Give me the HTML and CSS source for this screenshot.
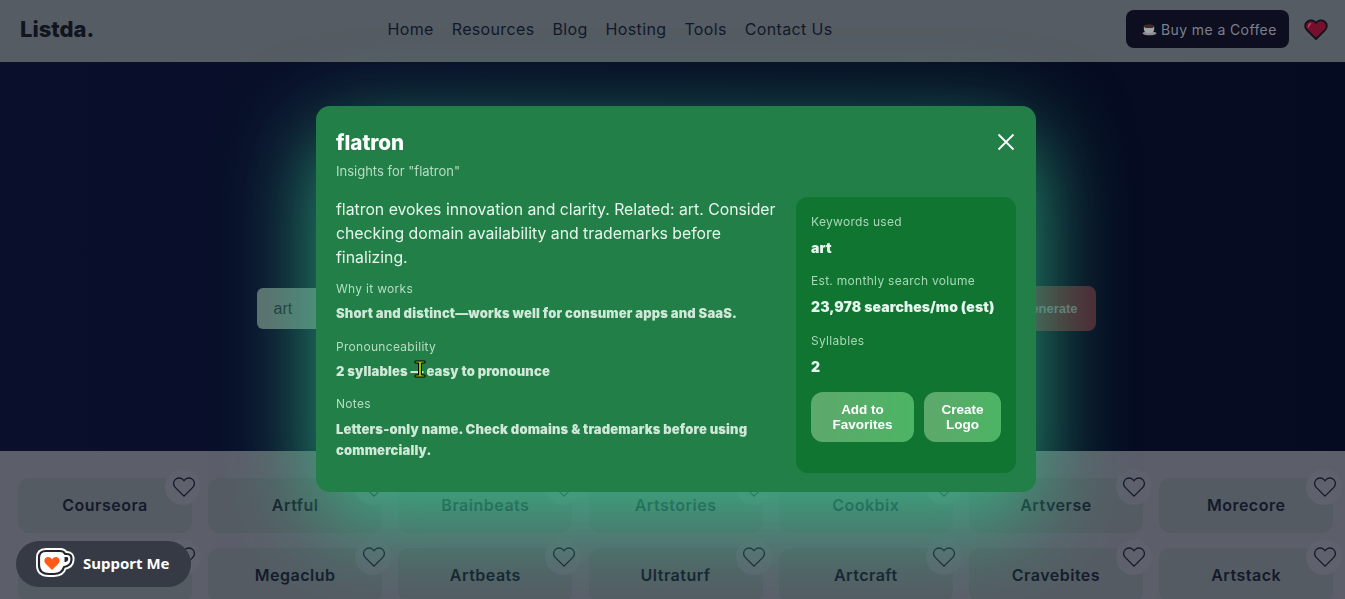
FILE: index.html

```html
<!DOCTYPE html>
<html lang="en">
<head>
  <meta charset="UTF-8" />
  <meta name="viewport" content="width=device-width, initial-scale=1.0"/>
  <title>Listda – Name Generator</title>
  <link rel="stylesheet" href="styles.css">
</head>
<body>
  <header class="topbar">
    <div class="logo">Listda.</div>
    <nav class="nav">
      <a>Home</a>
      <a>Resources</a>
      <a>Blog</a>
      <a>Hosting</a>
      <a>Tools</a>
      <a>Contact Us</a>
    </nav>
    <div class="actions">
      <a class="coffee-btn">
        <svg class="coffee-icon" viewBox="0 0 16 14" width="15" height="14">
          <ellipse cx="8" cy="11.600" rx="7.500" ry="2" fill="#8b8d93"/>
          <path d="M2 4h11v3.500c0 2.500-2.200 4-5.500 4S2 10 2 7.500z" fill="#a0a2a8"/>
          <ellipse cx="7.500" cy="4" rx="5.500" ry="2" fill="#3d2a26"/>
        </svg>
        Buy me a Coffee
      </a>
      <svg class="fav-heart" viewBox="0 0 24 22" width="24" height="23">
        <path d="M12 20.500 2.800 11.300C.3 8.800.8 4.800 3.500 2.900 6 1.200 9.800 1.500 12 4.600c2.200-3.100 6-3.400 8.500-1.700 2.700 1.900 3.200 5.900.7 8.400z" fill="#760f2c" stroke="#12121c" stroke-width="1.800" stroke-linejoin="round"/>
        <path d="M4.500 8.500c0-1.500.8-2.800 2.300-3.300" fill="none" stroke="#b0485f" stroke-width="1.400" stroke-linecap="round"/>
      </svg>
    </div>
  </header>

  <section class="hero">
    <form class="gen-form">
      <div class="gen-input">art</div>
      <div class="gen-btn">Generate</div>
    </form>
  </section>

  <section class="grid">
    <div class="card">Courseora<span class="like"><svg viewBox="0 0 24 24" width="24" height="24"><path d="M20.800 4.600a5.500 5.500 0 0 0-7.800 0L12 5.700l-1-1.100a5.500 5.500 0 0 0-7.800 7.800l1 1L12 21.200l7.800-7.800 1-1a5.500 5.500 0 0 0 0-7.800z"/></svg></span></div>
    <div class="card">Artful<span class="like"><svg viewBox="0 0 24 24" width="24" height="24"><path d="M20.800 4.600a5.500 5.500 0 0 0-7.800 0L12 5.700l-1-1.100a5.500 5.500 0 0 0-7.800 7.800l1 1L12 21.200l7.800-7.800 1-1a5.500 5.500 0 0 0 0-7.800z"/></svg></span></div>
    <div class="card">Brainbeats<span class="like"><svg viewBox="0 0 24 24" width="24" height="24"><path d="M20.800 4.600a5.500 5.500 0 0 0-7.800 0L12 5.700l-1-1.100a5.500 5.500 0 0 0-7.800 7.800l1 1L12 21.200l7.800-7.800 1-1a5.500 5.500 0 0 0 0-7.800z"/></svg></span></div>
    <div class="card">Artstories<span class="like"><svg viewBox="0 0 24 24" width="24" height="24"><path d="M20.800 4.600a5.500 5.500 0 0 0-7.800 0L12 5.700l-1-1.100a5.500 5.500 0 0 0-7.800 7.800l1 1L12 21.200l7.800-7.800 1-1a5.500 5.500 0 0 0 0-7.800z"/></svg></span></div>
    <div class="card">Cookbix<span class="like"><svg viewBox="0 0 24 24" width="24" height="24"><path d="M20.800 4.600a5.500 5.500 0 0 0-7.800 0L12 5.700l-1-1.100a5.500 5.500 0 0 0-7.800 7.800l1 1L12 21.200l7.800-7.800 1-1a5.500 5.500 0 0 0 0-7.800z"/></svg></span></div>
    <div class="card">Artverse<span class="like"><svg viewBox="0 0 24 24" width="24" height="24"><path d="M20.800 4.600a5.500 5.500 0 0 0-7.800 0L12 5.700l-1-1.100a5.500 5.500 0 0 0-7.800 7.800l1 1L12 21.200l7.800-7.800 1-1a5.500 5.500 0 0 0 0-7.800z"/></svg></span></div>
    <div class="card">Morecore<span class="like"><svg viewBox="0 0 24 24" width="24" height="24"><path d="M20.800 4.600a5.500 5.500 0 0 0-7.800 0L12 5.700l-1-1.100a5.500 5.500 0 0 0-7.800 7.800l1 1L12 21.200l7.800-7.800 1-1a5.500 5.500 0 0 0 0-7.800z"/></svg></span></div>
    <div class="card"><span class="like"><svg viewBox="0 0 24 24" width="24" height="24"><path d="M20.800 4.600a5.500 5.500 0 0 0-7.800 0L12 5.700l-1-1.100a5.500 5.500 0 0 0-7.800 7.800l1 1L12 21.200l7.800-7.800 1-1a5.500 5.500 0 0 0 0-7.800z"/></svg></span></div>
    <div class="card">Megaclub<span class="like"><svg viewBox="0 0 24 24" width="24" height="24"><path d="M20.800 4.600a5.500 5.500 0 0 0-7.800 0L12 5.700l-1-1.100a5.500 5.500 0 0 0-7.800 7.800l1 1L12 21.200l7.800-7.800 1-1a5.500 5.500 0 0 0 0-7.800z"/></svg></span></div>
    <div class="card">Artbeats<span class="like"><svg viewBox="0 0 24 24" width="24" height="24"><path d="M20.800 4.600a5.500 5.500 0 0 0-7.800 0L12 5.700l-1-1.100a5.500 5.500 0 0 0-7.800 7.800l1 1L12 21.200l7.800-7.800 1-1a5.500 5.500 0 0 0 0-7.800z"/></svg></span></div>
    <div class="card">Ultraturf<span class="like"><svg viewBox="0 0 24 24" width="24" height="24"><path d="M20.800 4.600a5.500 5.500 0 0 0-7.800 0L12 5.700l-1-1.100a5.500 5.500 0 0 0-7.800 7.800l1 1L12 21.200l7.800-7.800 1-1a5.500 5.500 0 0 0 0-7.800z"/></svg></span></div>
    <div class="card">Artcraft<span class="like"><svg viewBox="0 0 24 24" width="24" height="24"><path d="M20.800 4.600a5.500 5.500 0 0 0-7.800 0L12 5.700l-1-1.100a5.500 5.500 0 0 0-7.800 7.800l1 1L12 21.200l7.800-7.800 1-1a5.500 5.500 0 0 0 0-7.800z"/></svg></span></div>
    <div class="card">Cravebites<span class="like"><svg viewBox="0 0 24 24" width="24" height="24"><path d="M20.800 4.600a5.500 5.500 0 0 0-7.800 0L12 5.700l-1-1.100a5.500 5.500 0 0 0-7.800 7.800l1 1L12 21.200l7.800-7.800 1-1a5.500 5.500 0 0 0 0-7.800z"/></svg></span></div>
    <div class="card">Artstack<span class="like"><svg viewBox="0 0 24 24" width="24" height="24"><path d="M20.800 4.600a5.500 5.500 0 0 0-7.800 0L12 5.700l-1-1.100a5.500 5.500 0 0 0-7.800 7.800l1 1L12 21.200l7.800-7.800 1-1a5.500 5.500 0 0 0 0-7.800z"/></svg></span></div>
  </section>

  <div class="overlay">
    <div class="modal">
      <div class="modal-head">
        <div>
          <h2 class="modal-title">flatron</h2>
          <div class="modal-sub">Insights for "flatron"</div>
        </div>
        <svg class="close" viewBox="0 0 18 18" width="18" height="18"><path d="M1.500 1.500l15 15M16.500 1.500l-15 15"/></svg>
      </div>
      <div class="modal-body">
        <div class="main-col">
          <p class="desc">flatron evokes innovation and clarity. Related: art. Consider checking domain availability and trademarks before finalizing.</p>
          <div class="info first">
            <div class="info-label">Why it works</div>
            <div class="info-value">Short and distinct—works well for consumer apps and SaaS.</div>
          </div>
          <div class="info">
            <div class="info-label">Pronounceability</div>
            <div class="info-value">2 syllables — easy to pronounce</div>
          </div>
          <div class="info">
            <div class="info-label">Notes</div>
            <div class="info-value">Letters-only name. Check domains &amp; trademarks before using commercially.</div>
          </div>
        </div>
        <aside class="side">
          <div class="side-item">
            <div class="side-label">Keywords used</div>
            <div class="side-value">art</div>
          </div>
          <div class="side-item">
            <div class="side-label">Est. monthly search volume</div>
            <div class="side-value">23,978 searches/mo (est)</div>
          </div>
          <div class="side-item">
            <div class="side-label">Syllables</div>
            <div class="side-value">2</div>
          </div>
          <div class="side-btns">
            <button class="fav-btn">Add to Favorites</button>
            <button class="logo-btn">Create Logo</button>
          </div>
        </aside>
      </div>
      <svg class="cursor" viewBox="0 0 12 18" width="12" height="18">
        <path d="M1 1h10v2H7.500v12H11v2H1v-2h3.500V3H1z" fill="#9bc400" stroke="#000" stroke-width="1"/>
      </svg>
    </div>
  </div>

  <a class="kofi">
    <svg viewBox="0 0 40 32" width="40" height="32">
      <path d="M4 11Q4 4 11 4H25Q29 4 30 7H32Q37 7 36.500 13 36 19 29 20 27 27 19 27H14Q4 27 4 18Z" fill="#fff" stroke="#fff" stroke-width="6" stroke-linejoin="round"/>
      <path d="M4 11Q4 4 11 4H25Q29 4 30 7H32Q37 7 36.500 13 36 19 29 20 27 27 19 27H14Q4 27 4 18Z" fill="#fff" stroke="#23262e" stroke-width="2.200" stroke-linejoin="round"/>
      <path d="M29.500 10h2.500c1.500 0 1.500 3 .5 4-.5.5-2 1-3 1z" fill="#23262e"/>
      <path d="M17 23 10.500 16.500C8.300 14 9.500 10 13 10c2 0 3.300 1 4 2.500.7-1.500 2-2.500 4-2.500 3.500 0 4.700 4 2.500 6.500z" fill="#ff5a16"/>
    </svg>
    <span>Support Me</span>
  </a>
</body>
</html>
```

FILE: styles.css

```css
* { box-sizing: border-box; }
html, body { height: 599px; overflow: hidden; }
body { margin: 0; font-family: Inter, "Open Sans", sans-serif; background: #5c5e6a; color: #14192b; }
p, h2 { margin: 0; }

.topbar { height: 62px; background: #555c63; display: flex; align-items: center; justify-content: space-between; padding: 0 17px 4px 20px; }
.logo { font-size: 22px; font-weight: 800; color: #12141f; width: 74px; white-space: nowrap; }
.nav { display: flex; gap: 18px; font-size: 16px; letter-spacing: 0.35px; color: #12182b; }
.actions { display: flex; align-items: center; gap: 15px; }
.coffee-btn { display: flex; align-items: center; gap: 4px; width: 163px; height: 38px; padding-left: 16px; background: #0d0e1f; border-radius: 8px; color: #7b808e; font-size: 14px; letter-spacing: 0.4px; white-space: nowrap; }

.hero { height: 389px; background: linear-gradient(90deg, #0a102c, #050b20); display: flex; justify-content: center; padding: 224px 0 0 7px; }
.gen-form { width: 839px; height: 45px; display: flex; align-items: center; justify-content: space-between; }
.gen-input { width: 600px; height: 41px; padding: 0 17px; background: #5e6c6e; border-radius: 6px; color: #1e2a33; font: 16px "Liberation Sans", sans-serif; display: flex; align-items: center; }
.gen-btn { width: 130px; height: 45px; padding-right: 18px; background: #4f2430; border-radius: 8px; color: #6e6d74; font: bold 13px "Liberation Sans", sans-serif; display: flex; align-items: center; justify-content: flex-end; }

.grid { display: grid; grid-template-columns: repeat(7, 174px); gap: 15px 16.200px; padding: 27px 18px 0; }
.card { position: relative; height: 55px; padding-bottom: 2px; background: #555b63; border-radius: 12px; display: flex; align-items: center; justify-content: center; font-size: 16px; font-weight: 600; letter-spacing: 0.5px; color: #14192b; }
.like { position: absolute; top: -9px; right: -9px; width: 36px; height: 36px; border-radius: 50%; background: #5f616d; display: flex; align-items: center; justify-content: center; }
.like svg { fill: none; stroke: #14192b; stroke-width: 1.300; margin: -1px 0 0 1px; }

.overlay { position: fixed; inset: 0; display: flex; align-items: center; justify-content: center; padding: 0 0 1px 7px; }
.modal { position: relative; width: 720px; height: 386px; padding: 20px; background: #227f47; border-radius: 14px; box-shadow: 0 30px 90px rgba(50, 190, 135, 0.85); color: #fff; }
.modal-head { display: flex; justify-content: space-between; height: 71px; }
.modal-title { font-size: 20.600px; font-weight: 800; line-height: 34px; }
.modal-sub { font-size: 13px; line-height: 20px; margin-top: 1px; color: #b7dcc4; }
.close { margin: 7px 1px 0 0; fill: none; stroke: #fff; stroke-width: 1.800; }
.modal-body { display: flex; gap: 20px; }
.main-col { width: 440px; }
.desc { font-size: 15.800px; line-height: 24px; margin-top: 1px; color: #e8f5ed; }
.info { margin-top: 13px; }
.info.first { margin-top: 9px; }
.info:last-child { margin-top: 12px; }
.info-label { font-size: 12px; line-height: 20px; letter-spacing: 0.3px; color: #b7dcc4; }
.info-value { font-size: 13px; line-height: 21px; font-weight: 900; letter-spacing: 0.15px; color: #cfe8d8; margin-top: 4px; }
.info:last-child .info-value { margin-top: 5px; }

.side { width: 220px; height: 276px; padding: 15px 15px 0; background: #107531; border-radius: 12px; }
.side-item { margin-bottom: 13px; }
.side-item:first-child { margin-bottom: 12px; }
.side-label { font-size: 12px; line-height: 20px; letter-spacing: 0.3px; color: #a9d6b6; }
.side-value { font-size: 14px; line-height: 22px; font-weight: 900; letter-spacing: 0.08px; color: #e6f6ee; margin-top: 5px; }
.side-btns { display: flex; gap: 10px; margin-top: 14px; }
.side-btns button { height: 50px; border: 0; border-radius: 12px; background: linear-gradient(90deg, #5ea86c, #4cb564); color: #fff; font: bold 13.500px/15px "Liberation Sans", sans-serif; padding: 0 14px; }
.fav-btn { width: 103px; }
.logo-btn { width: 77px; }

.cursor { position: absolute; left: 98px; top: 254px; }

.kofi { position: fixed; left: 16px; bottom: 12px; width: 175px; height: 46px; padding: 0 0 2px 19px; border-radius: 23px; background: #353a45; display: flex; align-items: center; gap: 8px; color: #fff; font: bold 15px "Noto Sans", sans-serif; }
```
